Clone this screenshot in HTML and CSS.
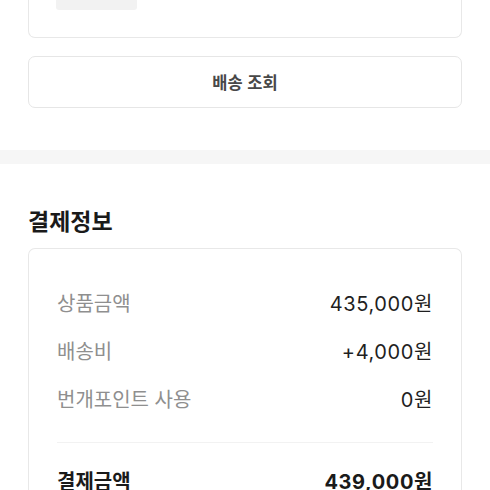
FILE: index.html
```html
<!DOCTYPE html>
<html lang="ko">
<head>
<meta charset="utf-8">
<link rel="stylesheet" href="styles.css">
</head>
<body>
<section class="section top">
  <div class="card card-top">
    <div class="thumb"></div>
  </div>
  <button class="track-btn">배송 조회</button>
</section>
<div class="band"></div>
<section class="section pay">
  <h2 class="title">결제정보</h2>
  <div class="card pay-card">
    <div class="row"><span class="label">상품금액</span><span class="value">435,000원</span></div>
    <div class="row"><span class="label">배송비</span><span class="value">+4,000원</span></div>
    <div class="row"><span class="label">번개포인트 사용</span><span class="value">0원</span></div>
    <div class="divider"></div>
    <div class="row total"><span class="label">결제금액</span><span class="value">439,000원</span></div>
  </div>
</section>
</body>
</html>
```
FILE: styles.css
```css
html, body {
  margin: 0;
  padding: 0;
  background: #fff;
  font-family: "Noto Sans CJK KR", "Noto Sans", sans-serif;
  color: #222;
}
.section {
  padding: 0 28px;
}
.card {
  border: 1px solid #e8e8e8;
  border-radius: 7px;
  background: #fff;
}
.card-top {
  border-top: none;
  border-radius: 0 0 7px 7px;
  height: 37px;
  padding: 0 27px;
}
.thumb {
  width: 81px;
  height: 10px;
  background: #f2f2f2;
  border-radius: 0 0 3px 3px;
}
.track-btn {
  display: block;
  width: 100%;
  height: 52px;
  margin-top: 18px;
  border: 1px solid #e6e6e6;
  border-radius: 7px;
  background: #fff;
  font-family: inherit;
  font-size: 16.5px;
  font-weight: 700;
  color: #484848;
  padding: 0;
}
.band {
  margin-top: 42px;
  height: 14px;
  background: #f6f6f6;
}
.title {
  margin: 41px 0 13px;
  font-size: 23px;
  line-height: 30px;
  font-weight: 700;
  color: #1a1a1a;
}
.pay-card {
  border-bottom: none;
  padding: 29px 28px 0;
}
.row {
  display: flex;
  justify-content: space-between;
  align-items: center;
  height: 48px;
  font-size: 20px;
}
.label {
  color: #8f8f8f;
}
.value {
  font-family: "Inter", "Noto Sans CJK KR", sans-serif;
  color: #1f1f1f;
  letter-spacing: 0.6px;
}
.divider {
  height: 1px;
  background: #f2f2f2;
  margin: 20px 0 13px;
}
.total .label,
.total .value {
  color: #1a1a1a;
  font-weight: 700;
}
```
